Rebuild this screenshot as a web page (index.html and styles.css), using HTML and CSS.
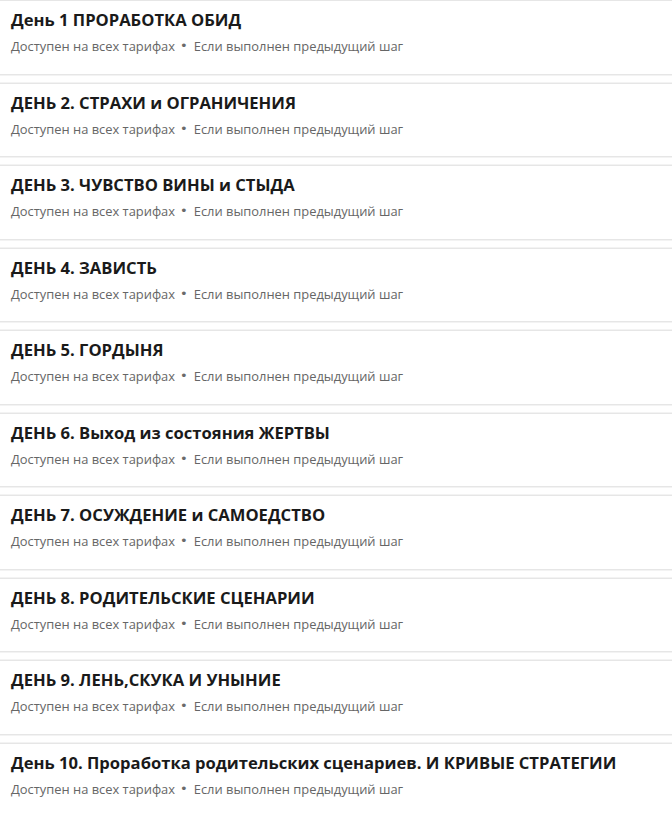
FILE: index.html
```html
<!DOCTYPE html>
<html lang="ru">
<head>
<meta charset="utf-8">
<title>Уроки</title>
<link rel="stylesheet" href="styles.css">
</head>
<body>
<ul class="lessons">
  <li class="lesson">
    <div class="lesson-title">День 1 ПРОРАБОТКА ОБИД</div>
    <div class="lesson-meta"><span>Доступен на всех тарифах</span><span class="dot">•</span><span>Если выполнен предыдущий шаг</span></div>
  </li>
  <li class="lesson">
    <div class="lesson-title">ДЕНЬ 2. СТРАХИ и ОГРАНИЧЕНИЯ</div>
    <div class="lesson-meta"><span>Доступен на всех тарифах</span><span class="dot">•</span><span>Если выполнен предыдущий шаг</span></div>
  </li>
  <li class="lesson">
    <div class="lesson-title">ДЕНЬ 3. ЧУВСТВО ВИНЫ и СТЫДА</div>
    <div class="lesson-meta"><span>Доступен на всех тарифах</span><span class="dot">•</span><span>Если выполнен предыдущий шаг</span></div>
  </li>
  <li class="lesson">
    <div class="lesson-title">ДЕНЬ 4. ЗАВИСТЬ</div>
    <div class="lesson-meta"><span>Доступен на всех тарифах</span><span class="dot">•</span><span>Если выполнен предыдущий шаг</span></div>
  </li>
  <li class="lesson">
    <div class="lesson-title">ДЕНЬ 5. ГОРДЫНЯ</div>
    <div class="lesson-meta"><span>Доступен на всех тарифах</span><span class="dot">•</span><span>Если выполнен предыдущий шаг</span></div>
  </li>
  <li class="lesson">
    <div class="lesson-title">ДЕНЬ 6. Выход из состояния ЖЕРТВЫ</div>
    <div class="lesson-meta"><span>Доступен на всех тарифах</span><span class="dot">•</span><span>Если выполнен предыдущий шаг</span></div>
  </li>
  <li class="lesson">
    <div class="lesson-title">ДЕНЬ 7. ОСУЖДЕНИЕ и САМОЕДСТВО</div>
    <div class="lesson-meta"><span>Доступен на всех тарифах</span><span class="dot">•</span><span>Если выполнен предыдущий шаг</span></div>
  </li>
  <li class="lesson">
    <div class="lesson-title">ДЕНЬ 8. РОДИТЕЛЬСКИЕ СЦЕНАРИИ</div>
    <div class="lesson-meta"><span>Доступен на всех тарифах</span><span class="dot">•</span><span>Если выполнен предыдущий шаг</span></div>
  </li>
  <li class="lesson">
    <div class="lesson-title">ДЕНЬ 9. ЛЕНЬ,СКУКА И УНЫНИЕ</div>
    <div class="lesson-meta"><span>Доступен на всех тарифах</span><span class="dot">•</span><span>Если выполнен предыдущий шаг</span></div>
  </li>
  <li class="lesson">
    <div class="lesson-title">День 10. Проработка родительских сценариев. И КРИВЫЕ СТРАТЕГИИ</div>
    <div class="lesson-meta"><span>Доступен на всех тарифах</span><span class="dot">•</span><span>Если выполнен предыдущий шаг</span></div>
  </li>
</ul>
</body>
</html>
```
FILE: styles.css
```css
html, body {
  margin: 0;
  padding: 0;
  background: #ffffff;
}
body {
  font-family: "Open Sans", "Noto Sans", "Liberation Sans", sans-serif;
  color: #1b1b1b;
}
.lessons {
  list-style: none;
  margin: 0;
  padding: 0;
  display: flex;
  flex-direction: column;
  gap: 8px;
}
.lesson {
  background: #fff;
  border-top: 1px solid #e6e6e6;
  border-bottom: 1px solid #e6e6e6;
  box-shadow: 0 1px 0 #f3f3f3, 0 -1px 0 #f3f3f3;
  padding: 7px 11px 17.5px;
  display: flex;
  flex-direction: column;
  gap: 4px;
}
.lesson-title {
  font-size: 16.6px;
  line-height: 24px;
  font-weight: 700;
  color: #1a1a1a;
  white-space: nowrap;
}
.lesson-meta {
  font-size: 12.9px;
  line-height: 20px;
  color: #666666;
  display: flex;
  align-items: center;
  white-space: nowrap;
}
.dot {
  margin: 0 6px 0 5px;
  font-family: "DejaVu Sans", sans-serif;
  font-size: 13px;
  color: #6a6a6a;
}
```
